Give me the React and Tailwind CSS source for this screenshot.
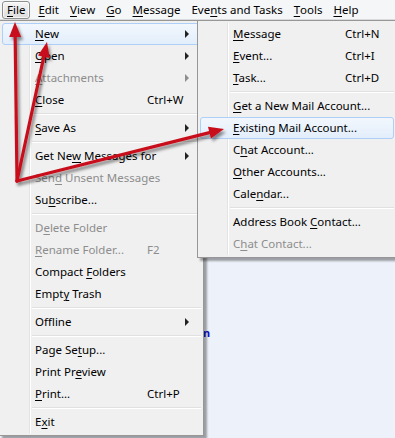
import React from 'react'

const FONT = { fontFamily: '"Noto Sans", "Open Sans", sans-serif' }

const MENUBAR = [
  ['File', 0], ['Edit', 0], ['View', 0], ['Go', 0], ['Message', 0],
  ['Events and Tasks', 3], ['Tools', 0], ['Help', 0],
]

const FILE_MENU = [
  { label: 'New', key: 0, sub: true, active: true },
  { label: 'Open', key: 0, sub: true },
  { label: 'Attachments', key: 0, sub: true, off: true },
  { label: 'Close', key: 0, short: 'Ctrl+W' },
  'sep',
  { label: 'Save As', key: 0, sub: true },
  'sep',
  { label: 'Get New Messages for', key: 6, sub: true },
  { label: 'Send Unsent Messages', key: 3, off: true },
  { label: 'Subscribe...', key: 2 },
  'sep',
  { label: 'Delete Folder', key: 1, off: true },
  { label: 'Rename Folder...', key: 0, off: true, short: 'F2' },
  { label: 'Compact Folders', key: 8 },
  { label: 'Empty Trash', key: 4 },
  'sep',
  { label: 'Offline', key: 3, sub: true },
  'sep',
  { label: 'Page Setup...', key: 7 },
  { label: 'Print Preview', key: 8 },
  { label: 'Print...', key: 0, short: 'Ctrl+P' },
  'sep',
  { label: 'Exit', key: 1 },
]

const NEW_MENU = [
  { label: 'Message', key: 0, short: 'Ctrl+N' },
  { label: 'Event...', key: 0, short: 'Ctrl+I' },
  { label: 'Task...', key: 0, short: 'Ctrl+D' },
  'sep',
  { label: 'Get a New Mail Account...', key: 0 },
  { label: 'Existing Mail Account...', key: 0, active: true },
  { label: 'Chat Account...', key: 1 },
  { label: 'Other Accounts...', key: 0 },
  { label: 'Calendar...', key: 4 },
  'sep',
  { label: 'Address Book Contact...', key: 13 },
  { label: 'Chat Contact...', key: 1, off: true },
]

function Key({ text, at }) {
  return (
    <>
      {text.slice(0, at)}
      <span className="underline underline-offset-2">{text[at]}</span>
      {text.slice(at + 1)}
    </>
  )
}

function Menu({ items, className }) {
  return (
    <div
      className={`absolute top-[20px] bg-[#f0f0f0] border border-[#979797] p-[2px] shadow-[3px_3px_2px_rgba(0,0,0,0.35)] ${className}`}
    >
      <div className="absolute left-[29px] top-[2px] bottom-[2px] w-[2px] border-l border-[#e2e3e3] bg-white" />
      {items.map((it, i) =>
        it === 'sep' ? (
          <div key={i} className="h-[6px] flex flex-col justify-center pl-[30px]">
            <div className="h-px bg-[#e0e0e0]" />
            <div className="h-px bg-white" />
          </div>
        ) : (
          <div
            key={i}
            className={`relative h-[22px] flex items-center pl-[32px] pr-[11px] text-[11.5px] ${
              it.off ? 'text-[#8d8d8d]' : 'text-black'
            } ${
              it.active
                ? 'rounded-[3px] border border-[#aecff7] bg-gradient-to-b from-[#f2f7fd] to-[#e3eefb]'
                : 'border border-transparent'
            }`}
          >
            <span className="w-[112px] shrink-0 whitespace-nowrap leading-none">
              <Key text={it.label} at={it.key} />
            </span>
            {it.short && <span className="leading-none">{it.short}</span>}
            <span className="flex-1" />
            {it.sub && (
              <span
                className={`w-0 h-0 border-y-[4px] border-y-transparent border-l-[4px] ${
                  it.off ? 'border-l-[#8d8d8d]' : 'border-l-[#222]'
                }`}
              />
            )}
          </div>
        )
      )}
    </div>
  )
}

function Arrows() {
  const o = [17, 181]
  const tips = [
    [15, 22],
    [47, 42],
    [224, 129],
  ]
  return (
    <svg className="absolute inset-0 pointer-events-none" width="395" height="438">
      <defs>
        <filter id="sh" x="-20%" y="-20%" width="140%" height="140%">
          <feDropShadow dx="2" dy="3" stdDeviation="1.6" floodColor="#000" floodOpacity="0.45" />
        </filter>
      </defs>
      <g filter="url(#sh)" fill="#c8101a" stroke="#c8101a">
        {tips.map(([x, y], i) => {
          const dx = x - o[0]
          const dy = y - o[1]
          const len = Math.hypot(dx, dy)
          const ux = dx / len
          const uy = dy / len
          const bx = x - ux * 15
          const by = y - uy * 15
          const px = -uy * 6
          const py = ux * 6
          return (
            <g key={i}>
              <line x1={o[0]} y1={o[1]} x2={bx} y2={by} strokeWidth="3.2" strokeLinecap="round" />
              <polygon points={`${x},${y} ${bx + px},${by + py} ${bx - px},${by - py}`} stroke="none" />
            </g>
          )
        })}
      </g>
    </svg>
  )
}

export default function App() {
  return (
    <div className="relative w-[395px] h-[438px] overflow-hidden bg-[#edf2fa]" style={FONT}>
      <div className="h-[20px] flex items-center gap-[1px] bg-[#f5f6f7] border-b border-[#dadbdc] pl-[2px] text-[11.5px] text-black">
        {MENUBAR.map(([name, k], i) => (
          <div
            key={name}
            className={`h-[18px] flex items-center px-[4px] leading-none ${
              i === 0
                ? 'rounded-[3px] border border-[#8e8f8f] bg-gradient-to-b from-[#f6f6f6] to-[#dcdcdc] shadow-[inset_0_0_0_1px_rgba(255,255,255,0.7)] mr-[2px]'
                : 'border border-transparent'
            }`}
          >
            <Key text={name} at={k} />
          </div>
        ))}
      </div>

      <div className="pt-[307px] pl-[203px] text-[11px] font-bold text-[#1010d0] leading-none">n</div>

      <Menu items={FILE_MENU} className="left-[-1px] w-[205px]" />
      <Menu items={NEW_MENU} className="left-[197px] w-[200px]" />
      <Arrows />
    </div>
  )
}
